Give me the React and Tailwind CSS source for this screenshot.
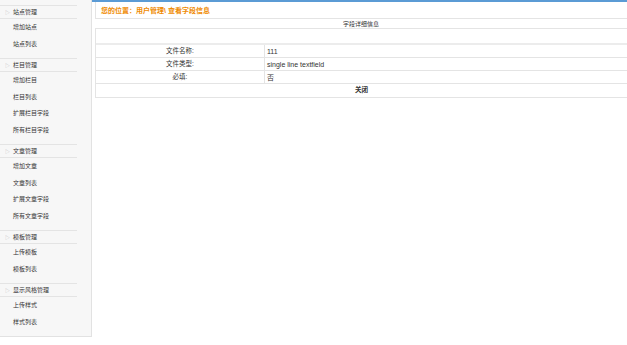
import React from 'react';

const menu = [
  { title: '站点管理', items: ['增加站点', '站点列表'] },
  { title: '栏目管理', items: ['增加栏目', '栏目列表', '扩展栏目字段', '所有栏目字段'] },
  { title: '文章管理', items: ['增加文章', '文章列表', '扩展文章字段', '所有文章字段'] },
  { title: '模板管理', items: ['上传模板', '模板列表'] },
  { title: '显示风格管理', items: ['上传样式', '样式列表'] },
];

const rows = [
  ['文件名称:', '111'],
  ['文件类型:', 'single line textfield'],
  ['必填:', '否'],
];

const font = { fontFamily: '"Liberation Sans", "Noto Sans CJK SC", sans-serif' };

export default function App() {
  return (
    <div className="flex items-start w-[627px] h-[345px] bg-white text-[#333] overflow-hidden" style={font}>
      {/* Sidebar */}
      <div className="w-[92px] h-[337px] shrink-0 bg-[#f7f7f7] border-r border-b border-[#e2e2e2] pt-[5px]">
        {menu.map((g) => (
          <div key={g.title} className="mb-[6px]">
            <div className="h-[14px] w-[77px] border-y border-[#e4e4e4] flex items-center text-[6px] leading-none">
              <span className="w-[13px] pl-[5px] text-[#bbb] text-[5px]">▷</span>
              <span>{g.title}</span>
            </div>
            {g.items.map((it) => (
              <div key={it} className="h-[16.5px] flex items-center pl-[13px] text-[6px] leading-none">
                {it}
              </div>
            ))}
          </div>
        ))}
      </div>

      {/* Main */}
      <div className="flex-1 flex flex-col">
        <div className="h-[2px] bg-[#5b9bd5]" />
        <div className="ml-[3px] h-[16px] border-l border-[#e4e4e4] flex items-center pl-[5px]">
          <span className="text-[7px] font-bold text-[#ef8a00] leading-none">您的位置：用户管理\ 查看字段信息</span>
        </div>
        <div className="ml-[3px]">
          <div className="h-[10px] border-t border-[#e4e4e4] flex items-center justify-center text-[6px] leading-none">
            字段详细信息
          </div>
          <div className="border-l border-[#e4e4e4]">
            <div className="h-[15px] border-t border-[#e4e4e4]" />
            <div className="border-t-2 border-[#ececec]">
              {rows.map(([k, v]) => (
                <div key={k} className="h-[13px] flex border-b border-[#e4e4e4] leading-none">
                  <div className="w-[169px] border-r border-[#e4e4e4] flex items-center justify-center text-[6.5px]">{k}</div>
                  <div className="flex-1 flex items-center pl-[2px] text-[7px]">{v}</div>
                </div>
              ))}
              <div className="h-[14px] flex items-center justify-center border-b border-[#e4e4e4] text-[6.5px] font-bold leading-none">
                关闭
              </div>
            </div>
          </div>
        </div>
      </div>
    </div>
  );
}
